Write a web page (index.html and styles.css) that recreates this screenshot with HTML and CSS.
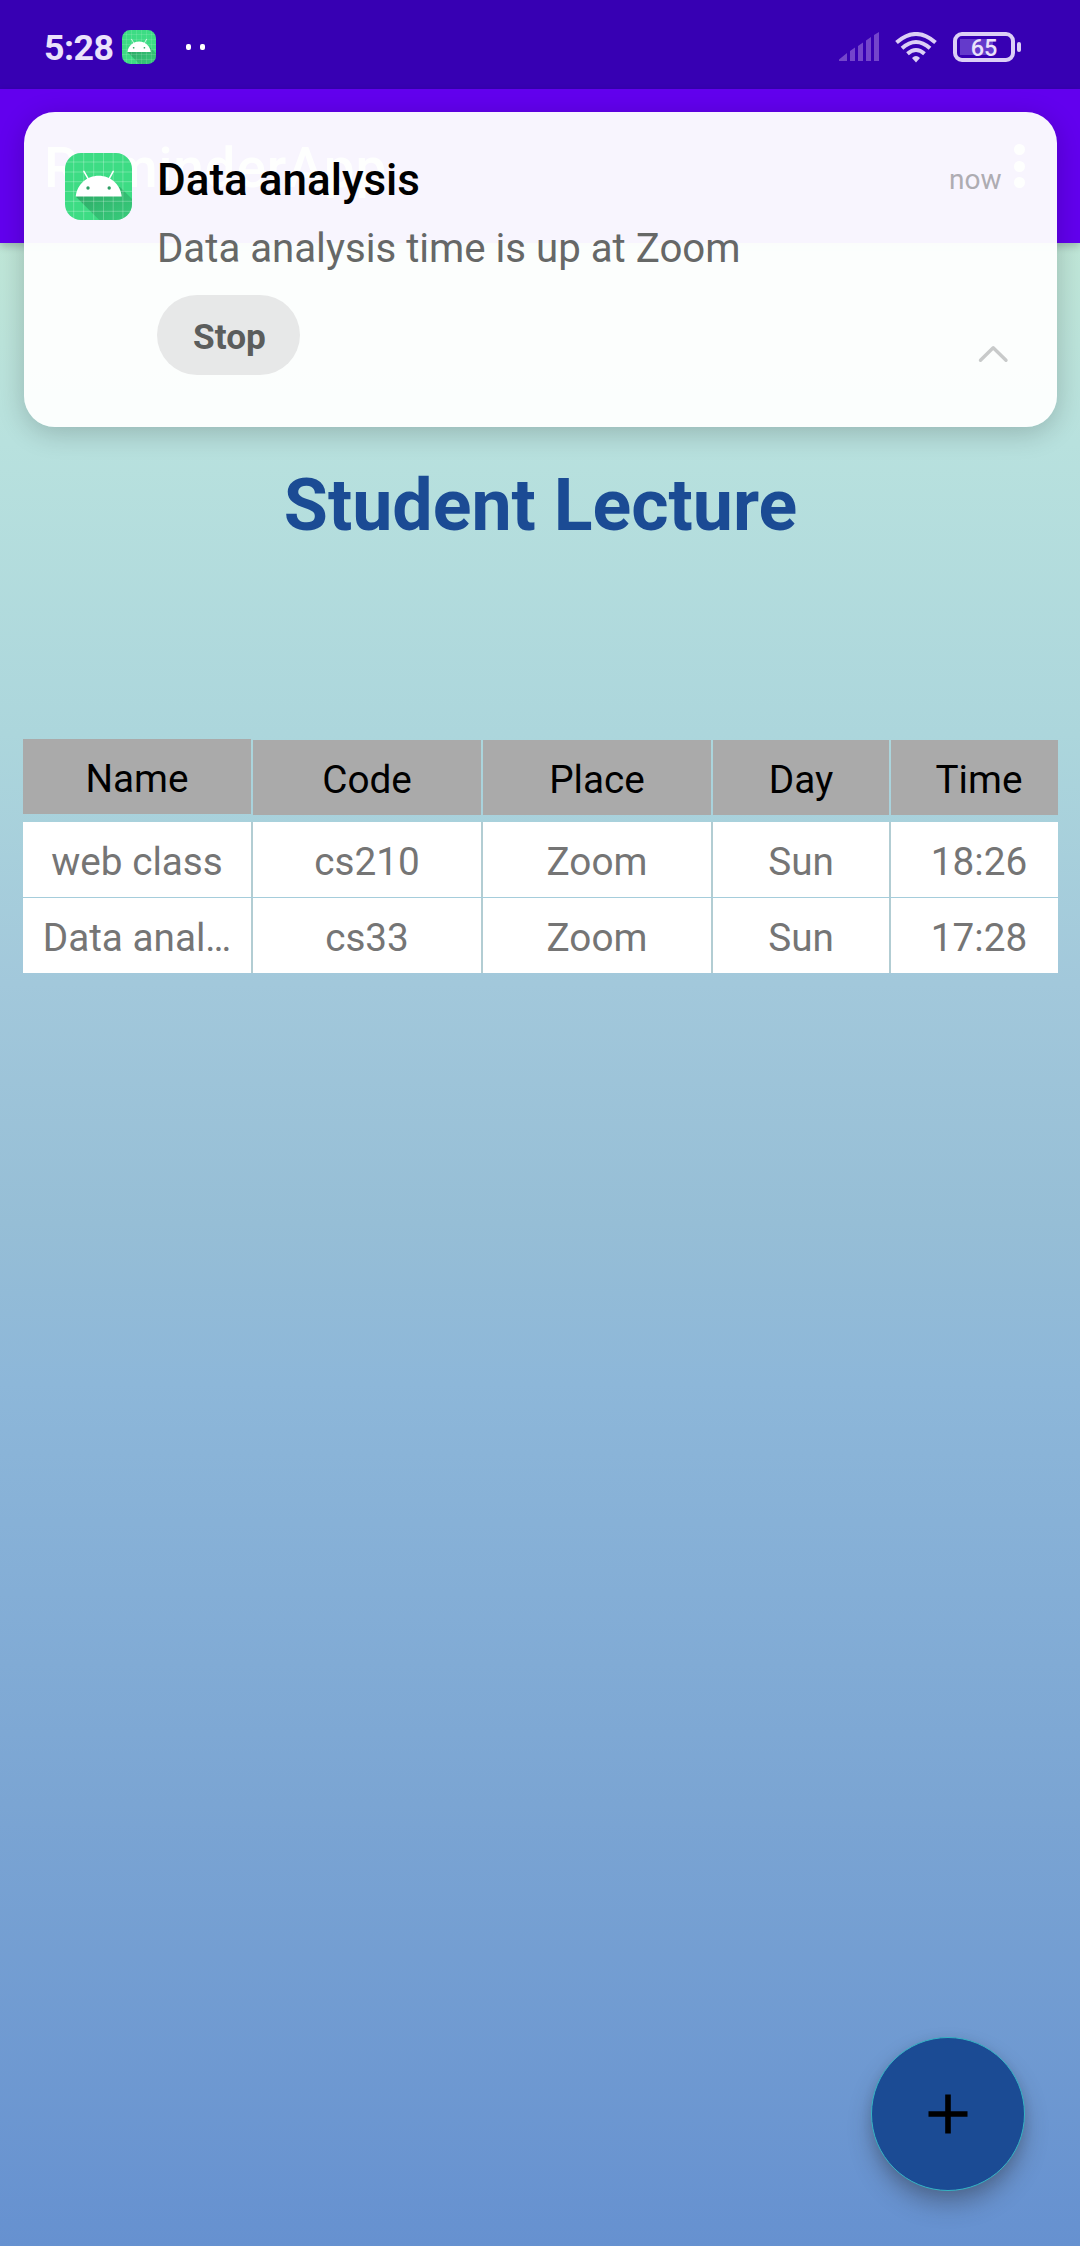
FILE: index.html
```html
<!DOCTYPE html>
<html lang="en">
<head>
<meta charset="utf-8">
<title>ReminderApp</title>
<link rel="stylesheet" href="styles.css">
</head>
<body>
<svg class="defs" width="0" height="0" aria-hidden="true">
  <defs>
    <linearGradient id="shade" x1="0" y1="0" x2="1" y2="1">
      <stop offset="0" stop-color="#1c7a49" stop-opacity=".6"/>
      <stop offset="1" stop-color="#2fae6b" stop-opacity=".35"/>
    </linearGradient>
    <clipPath id="tile"><rect width="67" height="67" rx="16"/></clipPath>
    <symbol id="app-icon" viewBox="0 0 67 67">
      <g clip-path="url(#tile)">
        <rect width="67" height="67" fill="#3ddc84"/>
        <path d="M10.7 43.5 34.7 67.5H67V46L55 34z" fill="url(#shade)"/>
        <path d="M8.7 0V67M18.7 0V67M28.7 0V67M38.5 0V67M48.2 0V67M57.9 0V67M0 9H67M0 19H67M0 28.7H67M0 38.4H67M0 48.3H67M0 58.3H67" stroke="#fff" stroke-opacity=".25" stroke-width="1"/>
        <path d="M10.7 43.5C12 31 22 22.7 33.7 22.7S55.4 31 56.7 43.5z" fill="#fff"/>
        <path d="M18.9 18.3 22.9 25.3M48.2 18.3 44.4 25.3" stroke="#fff" stroke-width="1.5" stroke-linecap="round"/>
        <circle cx="23" cy="35" r="1.7" fill="#2f9e64"/>
        <circle cx="44.2" cy="35" r="1.7" fill="#2f9e64"/>
      </g>
    </symbol>
  </defs>
</svg>
<div class="screen">
  <header class="status">
    <span class="clock">5:28</span>
    <svg class="status-app" width="34" height="34"><use href="#app-icon"/></svg>
    <span class="dots"><i></i><i></i></span>
    <div class="indicators">
      <svg class="signal" width="41" height="30" viewBox="0 0 41 30">
        <path d="M0 29V27.5L8 21V29zM11 29V19L16 15.5V29zM19 29V14L24 10.5V29zM27 29V8.5L32 5V29zM35 29V3L40 0V29z" fill="#7445cb"/>
      </svg>
      <svg class="wifi" width="42" height="31" viewBox="0 0 42 31">
        <g fill="none" stroke="#dccff6" stroke-width="4">
          <path d="M1.5 10.5Q21-6.5 40.5 10.5"/>
          <path d="M7 16.2Q21 3.8 35 16.2"/>
          <path d="M12.5 21.7Q21 14.3 29.5 21.7"/>
        </g>
        <path d="M17 26Q21 21.8 25 26L21 30.5z" fill="#dccff6"/>
      </svg>
      <div class="battery"><div class="battery-body"><span>65</span></div><div class="battery-tip"></div></div>
    </div>
  </header>
  <div class="appbar">
    <span class="app-title">ReminderApp</span>
    <span class="overflow"><i></i><i></i><i></i></span>
  </div>
  <main class="content">
    <h1>Student Lecture</h1>
    <div class="row head">
      <div class="cell first">Name</div><div class="cell">Code</div><div class="cell">Place</div><div class="cell">Day</div><div class="cell last">Time</div>
    </div>
    <div class="row">
      <div class="cell">web class</div><div class="cell">cs210</div><div class="cell">Zoom</div><div class="cell">Sun</div><div class="cell last">18:26</div>
    </div>
    <div class="row">
      <div class="cell">Data anal…</div><div class="cell">cs33</div><div class="cell">Zoom</div><div class="cell">Sun</div><div class="cell last">17:28</div>
    </div>
  </main>
  <section class="notification">
    <svg class="note-icon" width="67" height="67"><use href="#app-icon"/></svg>
    <div class="note-body">
      <div class="note-title">Data analysis</div>
      <div class="note-text">Data analysis time is up at Zoom</div>
      <button class="stop">Stop</button>
    </div>
    <div class="note-side">
      <span class="when">now</span>
      <svg width="31" height="18" viewBox="0 0 31 18"><path d="M2.5 15.2 15.2 2.8 28 15.2" fill="none" stroke="#c8caca" stroke-width="3.4" stroke-linecap="round" stroke-linejoin="round"/></svg>
    </div>
  </section>
  <button class="fab" aria-label="Add">
    <svg width="40" height="40" viewBox="0 0 40 40"><path d="M.5 20H39.5M20 .5V39.5" stroke="#000" stroke-width="5.6"/></svg>
  </button>
</div>
</body>
</html>
```
FILE: styles.css
```css
* { box-sizing: border-box; }
body { margin: 0; font-family: Roboto, "Liberation Sans", sans-serif; }
.defs { position: absolute; }
button { border: 0; padding: 0; font-family: inherit; }
.screen {
  position: relative;
  width: 1080px;
  height: 2246px;
  overflow: hidden;
  display: flex;
  flex-direction: column;
}
.status {
  height: 89px;
  flex: none;
  background: #3700b3;
  display: flex;
  align-items: flex-start;
  padding: 0 59px 0 44px;
}
.clock {
  width: 78px;
  padding-top: 27px;
  font-size: 35.75px;
  font-weight: 700;
  line-height: 42px;
  letter-spacing: -.5px;
  color: #ebe2fb;
}
.status-app { margin-top: 30px; }
.dots { display: flex; gap: 9px; margin: 44px 0 0 30px; }
.dots i { width: 5px; height: 6px; border-radius: 2px; background: #fff; }
.indicators { display: flex; margin-left: auto; padding-top: 32px; }
.wifi { margin-left: 15px; }
.battery { display: flex; align-items: center; gap: 2px; margin-left: 16px; height: 30px; }
.battery-body {
  width: 62px;
  height: 30px;
  border: 4px solid #dccff6;
  border-radius: 9px;
  background: linear-gradient(#643acb, #643acb) 3px 3px / 33px 16px no-repeat;
  display: flex;
  align-items: center;
  justify-content: center;
  font-size: 23.5px;
  font-weight: 500;
  color: #ebe2fb;
}
.battery-body span { padding-top: 2px; }
.battery-tip { width: 4px; height: 10px; border-radius: 2px; background: #dccff6; }
.appbar {
  height: 154px;
  flex: none;
  background: #6200ee;
  display: flex;
  align-items: center;
  justify-content: space-between;
  padding: 0 55px 0 44px;
  box-shadow: 0 3px 8px rgba(0, 0, 0, .2);
  z-index: 1;
}
.app-title {
  padding-top: 4px;
  font-size: 55px;
  font-weight: 500;
  line-height: 64px;
  letter-spacing: .8px;
  color: #fff;
}
.overflow { display: grid; gap: 5.5px; margin-right: 0; }
.overflow i { width: 11px; height: 11px; border-radius: 50%; background: #fff; }
.content {
  flex: 1;
  padding: 221px 22px 0 23px;
  background: linear-gradient(#c0e7d8 0, #b8e1de 200px, #acd6dc 490px, #a2c8db 740px, #96bed6 980px, #8db7d9 1140px, #7ba5d3 1560px, #6691d0 2003px);
}
h1 {
  margin: 0 0 192px;
  font-size: 71.7px;
  line-height: 84px;
  font-weight: 700;
  text-align: center;
  color: #1b4b94;
}
.row {
  display: grid;
  grid-template-columns: 228px 228px 228px 176px 167px;
  column-gap: 2px;
  margin-bottom: 1px;
  background: #b2cdd3;
}
.row.head { margin-bottom: 7px; background: none; }
.cell {
  height: 75px;
  padding-top: 4px;
  background: #fff;
  color: #757575;
  font-size: 38.7px;
  line-height: 71px;
  text-align: center;
  white-space: nowrap;
}
.head .cell { background: #aaa; color: #000; }
.head .first { margin-top: -1px; }
.last { padding-left: 9px; }
.notification {
  position: absolute;
  z-index: 2;
  left: 23.5px;
  top: 111.5px;
  width: 1033px;
  height: 315.5px;
  border-radius: 31px;
  background: rgba(254, 255, 254, .96);
  box-shadow: 0 6px 28px rgba(0, 0, 0, .2);
  display: flex;
  padding: 41.5px 48px 0 41.5px;
}
.note-icon { flex: none; margin-right: 25px; }
.note-body { flex: 1; }
.note-title { margin-top: 1px; font-size: 44px; font-weight: 500; line-height: 52px; color: #000; }
.note-text { margin-top: 18.5px; font-size: 40.2px; line-height: 48px; color: #666867; }
.stop {
  display: block;
  width: 143px;
  height: 80px;
  margin-top: 22.5px;
  padding: 3px 0 0 2px;
  border-radius: 40px;
  background: #e7e8e8;
  color: #5b5d5c;
  font-size: 35.2px;
  font-weight: 700;
}
.note-side { display: flex; flex-direction: column; align-items: flex-end; }
.when { margin: 10.5px 7px 149.5px 0; font-size: 28px; line-height: 32px; color: #aeacb2; }
.fab {
  position: absolute;
  left: 871px;
  top: 2037px;
  width: 154px;
  height: 154px;
  border-radius: 50%;
  border: 1.5px solid #35b4c4;
  background: #1b4b94;
  display: flex;
  align-items: center;
  justify-content: center;
  box-shadow: 0 14px 22px rgba(50, 55, 70, .38), 0 3px 10px rgba(50, 55, 70, .15);
}
```
